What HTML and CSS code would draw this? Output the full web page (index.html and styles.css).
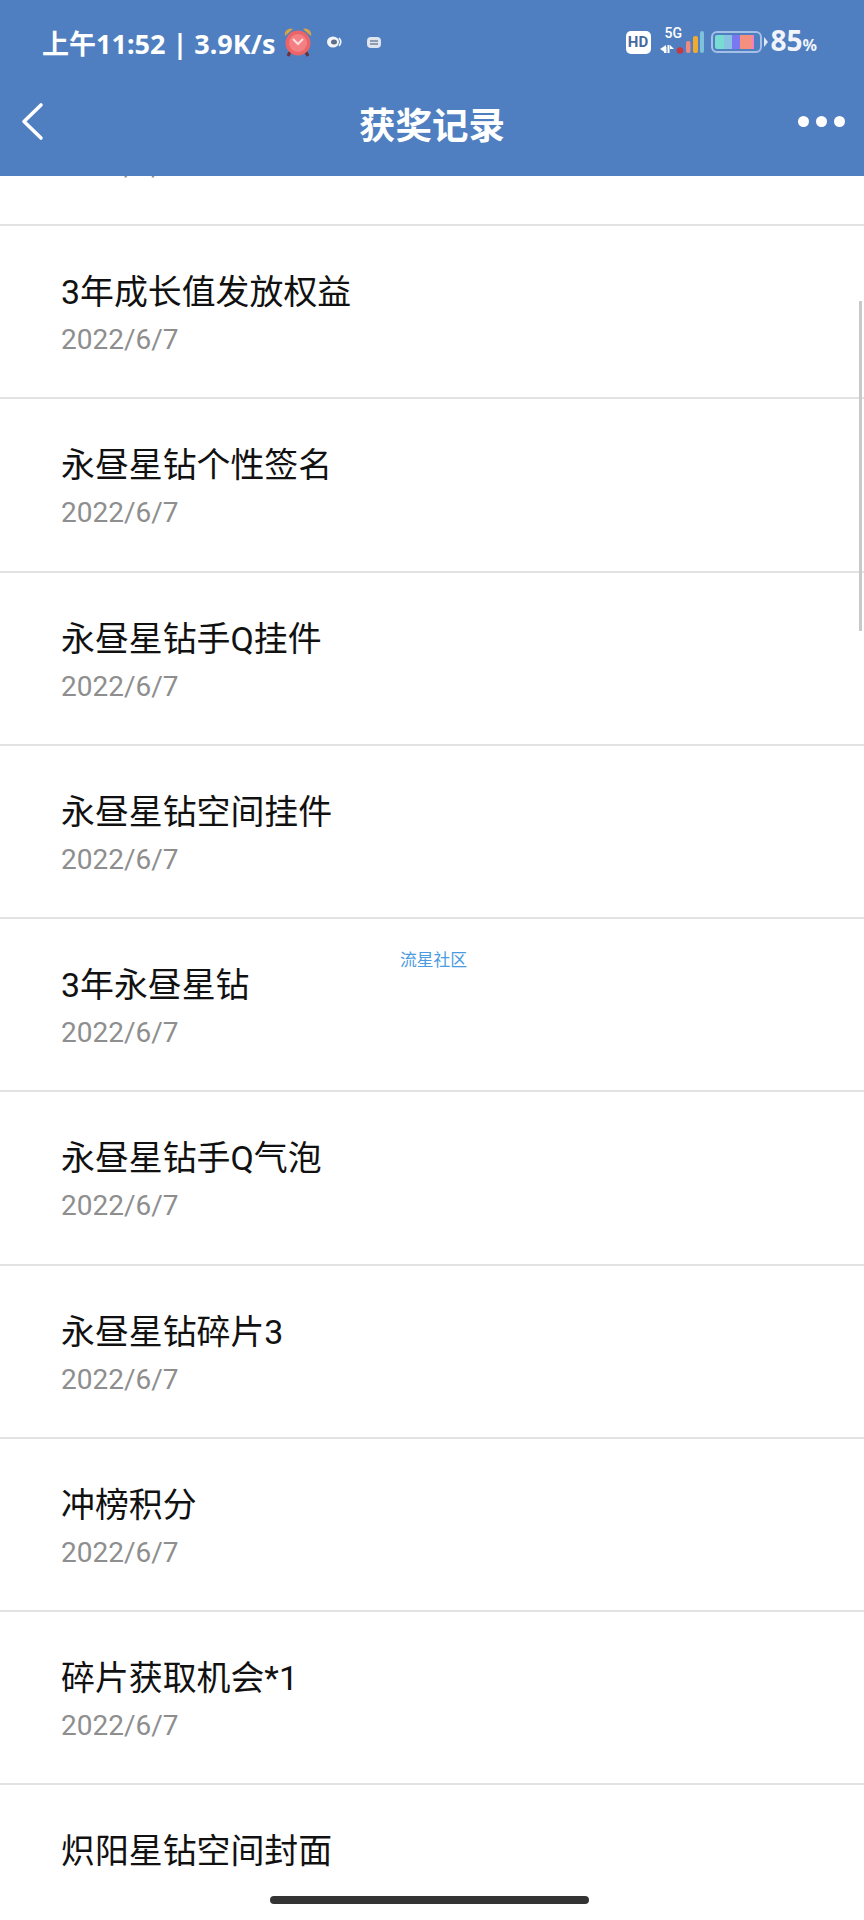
FILE: index.html
```html
<!DOCTYPE html>
<html lang="zh-CN">
<head>
    <meta charset="UTF-8">
    <meta name="viewport" content="width=device-width, initial-scale=1.0">
    <title>获奖记录</title>
    <link rel="stylesheet" href="styles.css">
</head>
<body>
    <div id="page">
        <div id="header">
            <div id="statusBar">
                <div class="statusLeft">
                    <span class="statusText">上午11:52 | 3.9K/s</span>
                    <svg class="alarm" width="28" height="30" viewBox="0 0 28 30">
                        <path d="M1 9 A6 6 0 0 1 9 2 Z" fill="#d9a441"/>
                        <path d="M27 9 A6 6 0 0 0 19 2 Z" fill="#d9a441"/>
                        <path d="M6 25 L4 29 M22 25 L24 29" stroke="#6e2f35" stroke-width="3"/>
                        <circle cx="14" cy="16" r="12.5" fill="#ea6468"/>
                        <circle cx="14" cy="16" r="9" fill="#f48084"/>
                        <path d="M9 12 L14 17 L19 12" fill="none" stroke="#fbdede" stroke-width="2"/>
                    </svg>
                    <svg class="miniIcon first" width="15" height="12" viewBox="0 0 15 12">
                        <ellipse cx="6" cy="6" rx="6" ry="5.5" fill="#f2f4f8"/>
                        <ellipse cx="7" cy="6" rx="3" ry="2.5" fill="#5f6f8a"/>
                        <path d="M12 2 Q15.5 6 12 10" fill="none" stroke="#f2f4f8" stroke-width="1.6"/>
                    </svg>
                    <svg class="miniIcon" width="14" height="11" viewBox="0 0 14 11">
                        <rect x="0" y="0" width="14" height="11" rx="4" fill="#dfe5ee"/>
                        <path d="M3 4 H11 M3 7 H11" stroke="#76859f" stroke-width="1.4"/>
                    </svg>
                </div>
                <div class="statusRight">
                    <div class="hdBadge">HD</div>
                    <div class="signal">
                        <span class="fiveG">5G</span>
                        <svg width="44" height="27" viewBox="0 0 44 27">
                            <path d="M0 22 L6 18 V26 Z" fill="#fff"/>
                            <rect x="4" y="20" width="2.5" height="6" fill="#fff"/>
                            <path d="M7.5 18 H9.5 V26 H7.5 Z M10 18 L14 22 H10 Z" fill="#fff"/>
                            <circle cx="20" cy="23.5" r="3.3" fill="#c6383f"/>
                            <rect x="26" y="14" width="4.5" height="12" rx="2" fill="#ee8a7f"/>
                            <rect x="33" y="9" width="5" height="17" rx="2" fill="#f0ab2e"/>
                            <rect x="40" y="4" width="4" height="22" rx="2" fill="#7fc0da"/>
                        </svg>
                    </div>
                    <div class="battery">
                        <div class="batteryCell">
                            <span class="cellOne"></span>
                            <span class="cellTwo"></span>
                            <span class="cellThree"></span>
                            <span class="cellFour"></span>
                        </div>
                    </div>
                    <div class="batteryNub"></div>
                    <span class="percent">85<small>%</small></span>
                </div>
            </div>
            <div id="navBar">
                <svg class="back" width="24" height="39" viewBox="0 0 24 39">
                    <path d="M21 3 L4 19.5 L21 36" fill="none" stroke="#fff" stroke-width="3.6" stroke-linecap="round" stroke-linejoin="round"/>
                </svg>
                <div class="navTitle">获奖记录</div>
                <div class="more"><i></i><i></i><i></i></div>
            </div>
        </div>
        <div id="listWrap">
            <div id="list">
                <div class="row"><div class="rowTitle">3年成长值</div><div class="rowDate">2022/6/7</div></div>
                <div class="row"><div class="rowTitle">3年成长值发放权益</div><div class="rowDate">2022/6/7</div></div>
                <div class="row"><div class="rowTitle">永昼星钻个性签名</div><div class="rowDate">2022/6/7</div></div>
                <div class="row"><div class="rowTitle">永昼星钻手Q挂件</div><div class="rowDate">2022/6/7</div></div>
                <div class="row"><div class="rowTitle">永昼星钻空间挂件</div><div class="rowDate">2022/6/7</div></div>
                <div class="row"><div class="rowTitle">3年永昼星钻</div><div class="rowDate">2022/6/7</div></div>
                <div class="row"><div class="rowTitle">永昼星钻手Q气泡</div><div class="rowDate">2022/6/7</div></div>
                <div class="row"><div class="rowTitle">永昼星钻碎片3</div><div class="rowDate">2022/6/7</div></div>
                <div class="row"><div class="rowTitle">冲榜积分</div><div class="rowDate">2022/6/7</div></div>
                <div class="row"><div class="rowTitle">碎片获取机会*1</div><div class="rowDate">2022/6/7</div></div>
                <div class="row"><div class="rowTitle">炽阳星钻空间封面</div></div>
            </div>
        </div>
        <div id="scrollThumb"></div>
        <div id="watermark">流星社区</div>
        <div id="homeBar"></div>
    </div>
</body>
</html>
```

FILE: styles.css
```css
html, body {
    margin: 0;
    padding: 0;
}
body {
    font-family: Roboto, "Noto Sans CJK SC", sans-serif;
    background-color: #fff;
}
#page {
    position: relative;
    width: 864px;
    height: 1920px;
    overflow: hidden;
    display: flex;
    flex-direction: column;
}
#header {
    height: 176px;
    flex-shrink: 0;
    background-color: #4f7fc0;
    color: #fff;
    display: flex;
    flex-direction: column;
}
#statusBar {
    height: 84px;
    display: flex;
    justify-content: space-between;
    align-items: center;
    padding: 0 47px 0 42px;
}
.statusLeft, .statusRight {
    display: flex;
    align-items: center;
}
.statusText {
    font-size: 27px;
    font-weight: 700;
    font-family: "Noto Sans", "Noto Sans CJK SC", sans-serif;
    white-space: nowrap;
}
.alarm {
    margin-left: 9px;
}
.miniIcon {
    margin-left: 25px;
}
.miniIcon.first {
    margin-left: 15px;
}
.hdBadge {
    width: 25px;
    height: 23px;
    border-radius: 5px;
    background-color: #fff;
    color: #45699f;
    font-size: 15px;
    font-weight: 700;
    line-height: 23px;
    text-align: center;
}
.signal {
    position: relative;
    width: 44px;
    height: 27px;
    margin: -3px 0 0 9px;
}
.signal svg {
    display: block;
}
.fiveG {
    position: absolute;
    left: 5px;
    top: -1px;
    font-size: 14px;
    font-weight: 500;
    line-height: 14px;
}
.battery {
    width: 51px;
    height: 22px;
    margin-left: 7px;
    box-sizing: border-box;
    border: 2px solid #a5c0e6;
    border-radius: 6px;
    padding: 2px;
}
.batteryCell {
    display: flex;
    height: 100%;
    overflow: hidden;
    border-radius: 2px;
}
.batteryCell span {
    display: block;
    height: 100%;
}
.cellOne { width: 9px; background-color: #78dcd2; }
.cellTwo { width: 8px; background-color: #88c4e2; }
.cellThree { width: 8px; background-color: #7a78f0; }
.cellFour { width: 14px; background: linear-gradient(to right, #f58f7e 75%, #f47bd0); }
.batteryNub {
    width: 0;
    height: 0;
    margin-left: 2px;
    border-left: 4px solid #dfe8f5;
    border-top: 5px solid transparent;
    border-bottom: 5px solid transparent;
}
.percent {
    margin-left: 3px;
    font-size: 28px;
    font-weight: 700;
    font-family: "Noto Sans", sans-serif;
    line-height: 30px;
    color: #f1f5fb;
}
.percent small {
    font-size: 16px;
    font-weight: 700;
}
#navBar {
    flex: 1;
    position: relative;
    display: flex;
    align-items: center;
    justify-content: center;
    padding-bottom: 14px;
}
.back {
    position: absolute;
    left: 20px;
    top: 18px;
}
.navTitle {
    font-size: 36.5px;
    font-weight: 700;
}
.more {
    position: absolute;
    right: 19px;
    top: 32px;
    display: flex;
    gap: 7px;
}
.more i {
    display: block;
    width: 11px;
    height: 11px;
    border-radius: 50%;
    background-color: #fff;
}
#listWrap {
    flex: 1;
    overflow: hidden;
}
#list {
    margin-top: -123px;
}
.row {
    height: 173.22px;
    box-sizing: border-box;
    border-bottom: 2px solid #e2e2e2;
    padding: 45px 0 0 61px;
}
.rowTitle {
    font-size: 33.9px;
    line-height: 44px;
    color: #111;
}
.rowDate {
    font-size: 28px;
    line-height: 40px;
    margin-top: 5px;
    color: #8e8e8e;
}
#scrollThumb {
    position: absolute;
    left: 859px;
    top: 301px;
    width: 3px;
    height: 330px;
    background-color: #c9c9c9;
}
#watermark {
    position: absolute;
    left: 400px;
    top: 950px;
    font-size: 16.8px;
    line-height: 20px;
    color: #4a9be0;
}
#homeBar {
    position: absolute;
    left: 270px;
    top: 1896px;
    width: 319px;
    height: 8px;
    border-radius: 4px;
    background-color: #333;
}
```
